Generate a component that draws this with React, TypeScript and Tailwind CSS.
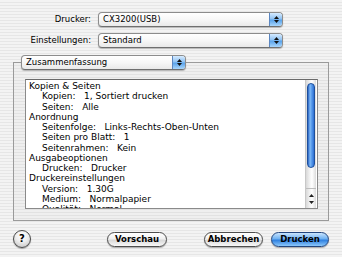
import React from 'react';

const stripes =
  'bg-[repeating-linear-gradient(180deg,#f3f3f3_0px,#f3f3f3_2px,#e6e6e6_2px,#e6e6e6_3px)]';

function Popup({ label, width }: { label: string; width: string }) {
  return (
    <div
      className={`${width} h-[15px] flex items-stretch rounded-[4px] border border-[#8c8c8c] border-b-[#6f6f6f] shadow-[0_1px_1px_rgba(0,0,0,0.25)] bg-[linear-gradient(180deg,#ffffff_0%,#f7f7f7_50%,#e9e9e9_100%)] overflow-hidden`}
    >
      <div className="flex-1 pl-[4px] flex items-center text-[8.5px] text-black leading-none">
        {label}
      </div>
      <div className="w-[13px] flex flex-col items-center justify-center gap-[1px] border-l border-[#5b86c0] bg-[linear-gradient(180deg,#d6ebff_0%,#8fc2f3_45%,#5aa3ea_55%,#a9d6fb_100%)]">
        <svg width="5" height="3" viewBox="0 0 5 3">
          <path d="M2.5 0 L5 3 L0 3 Z" fill="#111" />
        </svg>
        <svg width="5" height="3" viewBox="0 0 5 3">
          <path d="M0 0 L5 0 L2.5 3 Z" fill="#111" />
        </svg>
      </div>
    </div>
  );
}

function PillButton({ label, width, primary }: { label: string; width: string; primary?: boolean }) {
  return (
    <div
      className={`${width} h-[15px] rounded-full flex items-center justify-center text-[8.5px] font-semibold leading-none shadow-[0_1px_1px_rgba(0,0,0,0.3)] ${
        primary
          ? 'border border-[#23467f] text-black bg-[linear-gradient(180deg,#c9e4fd_0%,#6eb1f2_45%,#2f80e0_55%,#8cc8fb_100%)]'
          : 'border border-[#4d4d4d] text-black bg-[linear-gradient(180deg,#ffffff_0%,#f1f1f1_45%,#d9d9d9_55%,#f8f8f8_100%)]'
      }`}
    >
      {label}
    </div>
  );
}

const rows: { text: string; value?: string; indent?: boolean }[] = [
  { text: 'Kopien & Seiten' },
  { text: 'Kopien:', value: '1, Sortiert drucken', indent: true },
  { text: 'Seiten:', value: 'Alle', indent: true },
  { text: 'Anordnung' },
  { text: 'Seitenfolge:', value: 'Links-Rechts-Oben-Unten', indent: true },
  { text: 'Seiten pro Blatt:', value: '1', indent: true },
  { text: 'Seitenrahmen:', value: 'Kein', indent: true },
  { text: 'Ausgabeoptionen' },
  { text: 'Drucken:', value: 'Drucker', indent: true },
  { text: 'Druckereinstellungen' },
  { text: 'Version:', value: '1.30G', indent: true },
  { text: 'Medium:', value: 'Normalpapier', indent: true },
  { text: 'Qualität:', value: 'Normal', indent: true },
];

export default function App() {
  return (
    <div
      className={`w-[342px] h-[257px] overflow-hidden ${stripes} flex flex-col pt-[12px] text-black`}
      style={{ fontFamily: '"DejaVu Sans", "Lucida Grande", sans-serif' }}
    >
      <div className="flex items-center">
        <div className="w-[91px] text-right text-[8.5px] leading-none">Drucker:</div>
        <div className="ml-[7px]">
          <Popup label="CX3200(USB)" width="w-[185px]" />
        </div>
      </div>
      <div className="flex items-center mt-[6px]">
        <div className="w-[91px] text-right text-[8.5px] leading-none">Einstellungen:</div>
        <div className="ml-[7px]">
          <Popup label="Standard" width="w-[185px]" />
        </div>
      </div>

      <div className="mt-[7px] ml-[13px] w-[316px] flex flex-col">
        <div className="ml-[8px] relative z-10">
          <Popup label="Zusammenfassung" width="w-[165px]" />
        </div>
        <div className="-mt-[8px] h-[159px] border border-[#9a9a9a] bg-black/[0.015] pt-[16px] pl-[11px]">
          <div className="w-[293px] h-[130px] bg-white border border-[#8a8a8a] border-t-[#6a6a6a] flex">
            <div className="flex-1 overflow-hidden pt-[1px] pl-[3px] text-[9px] leading-[10.25px] whitespace-pre">
              {rows.map((r, i) => (
                <div key={i} className={r.indent ? 'pl-[13px]' : ''}>
                  {r.text}
                  {r.value ? '   ' + r.value : ''}
                </div>
              ))}
            </div>
            <div className="w-[11px] mr-[1px] flex flex-col bg-[linear-gradient(90deg,#d8d8d8,#f4f4f4_40%,#ffffff_60%,#dcdcdc)] border-l border-[#c8c8c8]">
              <div className="flex-1 pt-[3px] px-[1px]">
                <div className="h-[85px] rounded-full border border-[#1d4f9c] bg-[linear-gradient(90deg,#2a63c4,#7fbaf6_35%,#5a9cec_60%,#2d6fd3)]" />
              </div>
              <div className="h-[20px] flex flex-col items-center justify-center gap-[4px] border-t border-[#bdbdbd]">
                <svg width="5" height="3" viewBox="0 0 5 3">
                  <path d="M2.5 0 L5 3 L0 3 Z" fill="#222" />
                </svg>
                <svg width="5" height="3" viewBox="0 0 5 3">
                  <path d="M0 0 L5 0 L2.5 3 Z" fill="#222" />
                </svg>
              </div>
            </div>
          </div>
        </div>
      </div>

      <div className="mt-[9px] flex items-center">
        <div className="ml-[13px] w-[18px] h-[18px] rounded-full border border-[#4a4a4a] flex items-center justify-center text-[10px] font-bold leading-none shadow-[0_1px_1px_rgba(0,0,0,0.3)] bg-[radial-gradient(circle_at_50%_30%,#ffffff_0%,#eeeeee_45%,#bdbdbd_100%)]">
          ?
        </div>
        <div className="ml-[76px]">
          <PillButton label="Vorschau" width="w-[60px]" />
        </div>
        <div className="ml-[37px]">
          <PillButton label="Abbrechen" width="w-[59px]" />
        </div>
        <div className="ml-[8px]">
          <PillButton label="Drucken" width="w-[58px]" primary />
        </div>
      </div>
    </div>
  );
}
